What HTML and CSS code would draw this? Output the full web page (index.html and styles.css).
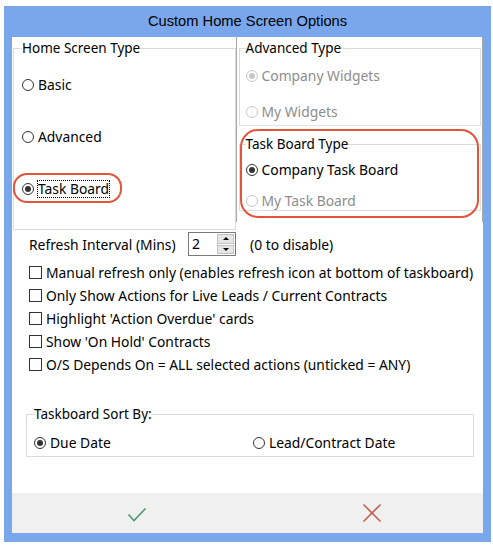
FILE: index.html
```html
<!DOCTYPE html>
<html lang="en">
<head>
    <meta charset="UTF-8">
    <title>Custom Home Screen Options</title>
    <link rel="stylesheet" href="styles.css">
</head>
<body>
    <div class="dialog">
        <div class="titlebar">Custom Home Screen Options</div>

        <div class="content">
            <!-- top panes -->
            <div class="panes">
                <div class="pane pane-left">
                    <fieldset class="group group-home">
                        <legend>Home Screen Type</legend>
                        <div class="opt"><span class="radio"></span>Basic</div>
                        <div class="opt"><span class="radio"></span>Advanced</div>
                        <div class="opt opt-marked">
                            <span class="radio checked"></span><span class="focus">Task Board</span>
                            <span class="mark mark-task"></span>
                        </div>
                    </fieldset>
                </div>
                <div class="pane pane-right">
                    <fieldset class="group group-adv">
                        <legend>Advanced Type</legend>
                        <div class="opt disabled"><span class="radio checked"></span>Company Widgets</div>
                        <div class="opt disabled"><span class="radio"></span>My Widgets</div>
                    </fieldset>
                    <fieldset class="group group-board">
                        <legend>Task Board Type</legend>
                        <div class="opt"><span class="radio checked"></span>Company Task Board</div>
                        <div class="opt disabled"><span class="radio"></span>My Task Board</div>
                        <span class="mark mark-board"></span>
                    </fieldset>
                </div>
            </div>

            <!-- refresh + checkboxes -->
            <div class="settings">
                <div class="refresh">
                    <span class="refresh-label">Refresh Interval (Mins)</span>
                    <div class="spinner">
                        <span class="spin-value">2</span>
                        <div class="spin-btns">
                            <span class="spin-btn"><span class="arrow-up"></span></span>
                            <span class="spin-btn"><span class="arrow-down"></span></span>
                        </div>
                    </div>
                    <span class="refresh-hint">(0 to disable)</span>
                </div>
                <div class="check first"><span class="box"></span>Manual refresh only (enables refresh icon at bottom of taskboard)</div>
                <div class="check"><span class="box"></span>Only Show Actions for Live Leads / Current Contracts</div>
                <div class="check"><span class="box"></span>Highlight 'Action Overdue' cards</div>
                <div class="check"><span class="box"></span>Show 'On Hold' Contracts</div>
                <div class="check"><span class="box"></span>O/S Depends On = ALL selected actions (unticked = ANY)</div>
            </div>

            <fieldset class="group group-sort">
                <legend>Taskboard Sort By:</legend>
                <div class="sort-row">
                    <div class="opt"><span class="radio checked"></span>Due Date</div>
                    <div class="opt"><span class="radio"></span>Lead/Contract Date</div>
                </div>
            </fieldset>
        </div>

        <div class="footer">
            <svg class="btn-icon btn-ok" width="20" height="16" viewBox="0 0 20 16">
                <polyline points="1.5,7.5 7,13.5 18.5,1.5" fill="none" stroke="#4f9a73" stroke-width="1.6"/>
            </svg>
            <svg class="btn-icon" width="20" height="20" viewBox="0 0 20 20">
                <line x1="1.5" y1="1.5" x2="18.5" y2="18.5" stroke="#c0604c" stroke-width="1.6"/>
                <line x1="18.5" y1="1.5" x2="1.5" y2="18.5" stroke="#c0604c" stroke-width="1.6"/>
            </svg>
        </div>
    </div>
</body>
</html>
```

FILE: styles.css
```css
body {
    margin: 0;
    background: #ffffff;
    font-family: "Noto Sans", sans-serif;
    font-size: 13.85px;
    color: #000;
}

.dialog {
    width: 471px;
    height: 527px;
    margin: 6px 0 0 4px;
    padding: 0 8px 9px 8px;
    background: #7aa7ec;
}

.titlebar {
    height: 31px;
    line-height: 31px;
    text-align: center;
    font-family: "Liberation Sans", Arial, sans-serif;
    font-size: 14.7px;
}

.content {
    height: 456px;
    background: #fff;
}

/* group boxes */
.group {
    margin: 0;
    padding: 0;
    border: 1px solid #dcdcdc;
    min-width: 0;
}

.group legend {
    padding: 0;
    font-size: 13.5px;
    line-height: 18px;
}

.opt {
    display: flex;
    align-items: center;
    height: 20px;
    line-height: 20px;
    white-space: nowrap;
}

.opt.disabled {
    color: #8d8d8d;
}

.radio {
    width: 10px;
    height: 10px;
    border: 1px solid #333;
    border-radius: 50%;
    margin-right: 4px;
    position: relative;
    flex-shrink: 0;
}

.radio.checked::after {
    content: "";
    position: absolute;
    left: 2px;
    top: 2px;
    width: 6px;
    height: 6px;
    border-radius: 50%;
    background: #333;
}

.disabled .radio {
    border-color: #c6c6c6;
}

.disabled .radio.checked::after {
    background: #c6c6c6;
}

/* top panes */
.panes {
    display: flex;
    height: 185px;
}

.pane-left {
    width: 224px;
}

.pane-right {
    width: 244px;
    border-left: 1px solid #a8a8a8;
    border-right: 1px solid #a8a8a8;
    padding-left: 2px;
}

.group-home {
    margin: 2px 0 0 1px;
    height: 171px;
    padding: 18px 0 0 8px;
    display: flex;
    flex-direction: column;
    gap: 32px;
}

.group-adv {
    margin: 2px 1px 0 0;
    height: 76px;
    padding: 9px 0 0 6px;
    display: flex;
    flex-direction: column;
    gap: 16px;
    border-bottom-color: #e4e4e4;
}

.group-board {
    margin: 9px 1px 0 0;
    height: 67px;
    padding: 7px 0 0 6px;
    display: flex;
    flex-direction: column;
    gap: 11px;
    position: relative;
}

.focus {
    outline: 1px dotted #000;
    outline-offset: 0;
    line-height: 16px;
}

.opt-marked {
    position: relative;
}

/* red annotation outlines */
.mark {
    position: absolute;
    border: 2px solid #e2553a;
    border-radius: 14px;
    pointer-events: none;
}

.mark-task {
    left: -9px;
    top: -6px;
    width: 105px;
    height: 26px;
}

.mark-board {
    left: 0;
    top: -24px;
    width: 235px;
    height: 85px;
    border-radius: 18px;
}

/* refresh and checkboxes */
.settings {
    padding: 10px 0 0 17px;
}

.refresh {
    display: flex;
    align-items: center;
    height: 24px;
}

.refresh-label {
    width: 159px;
}

.spinner {
    display: flex;
    width: 46px;
    height: 22px;
    border: 1px solid #7a7a7a;
}

.spin-value {
    flex: 1;
    padding-left: 3px;
    line-height: 22px;
    font-size: 14px;
}

.spin-btns {
    display: flex;
    flex-direction: column;
    gap: 1px;
    padding: 1px;
}

.spin-btn {
    width: 15px;
    height: 9px;
    background: #e6e6e6;
    border: 1px solid #c2c2c2;
    display: flex;
    align-items: center;
    justify-content: center;
}

.arrow-up {
    border-left: 3px solid transparent;
    border-right: 3px solid transparent;
    border-bottom: 3px solid #000;
}

.arrow-down {
    border-left: 3px solid transparent;
    border-right: 3px solid transparent;
    border-top: 3px solid #000;
}

.refresh-hint {
    margin-left: 14px;
}

.check {
    display: flex;
    align-items: center;
    height: 20px;
    margin-top: 3px;
    white-space: nowrap;
}

.check.first {
    margin-top: 6px;
}

.box {
    width: 11px;
    height: 11px;
    border: 1px solid #333;
    margin-right: 4px;
    flex-shrink: 0;
}

/* sort group */
.group-sort {
    margin: 31px 9px 0 14px;
    height: 40px;
    padding: 10px 0 0 7px;
}

.sort-row {
    display: flex;
}

.sort-row .opt:first-child {
    width: 219px;
}

/* buttons bar */
.footer {
    height: 40px;
    background: #f0f0f0;
    display: flex;
    align-items: center;
    padding-left: 115px;
    gap: 215px;
}

.btn-ok {
    margin-top: 4px;
}

.btn-icon {
    display: block;
}
```
